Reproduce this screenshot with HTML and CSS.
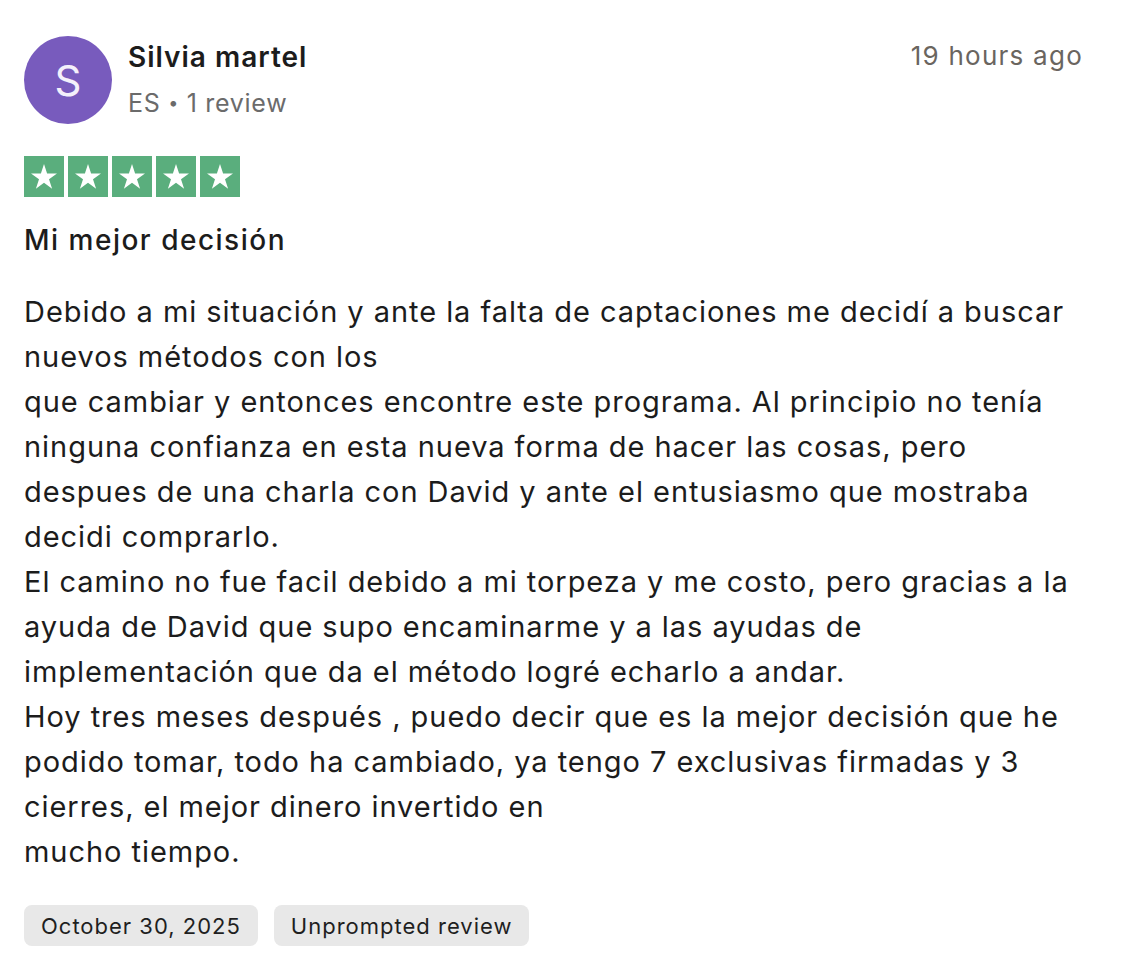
FILE: index.html
```html
<!DOCTYPE html>
<html lang="es">
<head>
<meta charset="utf-8">
<title>Review</title>
<link rel="stylesheet" href="styles.css">
</head>
<body>
<article class="review">
  <header class="review-head">
    <div class="avatar">S</div>
    <div class="who">
      <div class="name">Silvia martel</div>
      <div class="meta">ES <span class="dot">•</span> 1 review</div>
    </div>
    <time class="ago">19 hours ago</time>
  </header>
  <div class="stars">
    <span class="star"><svg viewBox="0 0 40 40"><path d="M20 7.5l3.1 9.4h9.9l-8 5.8 3.1 9.5-8.1-5.9-8.1 5.9 3.1-9.5-8-5.8h9.9z" fill="#fff"/></svg></span>
    <span class="star"><svg viewBox="0 0 40 40"><path d="M20 7.5l3.1 9.4h9.9l-8 5.8 3.1 9.5-8.1-5.9-8.1 5.9 3.1-9.5-8-5.8h9.9z" fill="#fff"/></svg></span>
    <span class="star"><svg viewBox="0 0 40 40"><path d="M20 7.5l3.1 9.4h9.9l-8 5.8 3.1 9.5-8.1-5.9-8.1 5.9 3.1-9.5-8-5.8h9.9z" fill="#fff"/></svg></span>
    <span class="star"><svg viewBox="0 0 40 40"><path d="M20 7.5l3.1 9.4h9.9l-8 5.8 3.1 9.5-8.1-5.9-8.1 5.9 3.1-9.5-8-5.8h9.9z" fill="#fff"/></svg></span>
    <span class="star"><svg viewBox="0 0 40 40"><path d="M20 7.5l3.1 9.4h9.9l-8 5.8 3.1 9.5-8.1-5.9-8.1 5.9 3.1-9.5-8-5.8h9.9z" fill="#fff"/></svg></span>
  </div>
  <h2 class="title">Mi mejor decisión</h2>
  <p class="body">Debido a mi situación y ante la falta de captaciones me decidí a buscar<br>nuevos métodos con los<br>que cambiar y entonces encontre este programa. Al principio no tenía<br>ninguna confianza en esta nueva forma de hacer las cosas, pero<br>despues de una charla con David y ante el entusiasmo que mostraba<br>decidi comprarlo.<br>El camino no fue facil debido a mi torpeza y me costo, pero gracias a la<br>ayuda de David que supo encaminarme y a las ayudas de<br>implementación que da el método logré echarlo a andar.<br>Hoy tres meses después , puedo decir que es la mejor decisión que he<br>podido tomar, todo ha cambiado, ya tengo 7 exclusivas firmadas y 3<br>cierres, el mejor dinero invertido en<br>mucho tiempo.</p>
  <div class="tags">
    <span class="tag">October 30, 2025</span>
    <span class="tag">Unprompted review</span>
  </div>
</article>
</body>
</html>
```
FILE: styles.css
```css
* { box-sizing: border-box; }
html, body { margin: 0; background: #fff; }
body { font-family: Inter, "Noto Sans", sans-serif; color: #1c1c1c; }
.review { padding: 36px 47px 0 24px; }
.review-head { display: flex; align-items: flex-start; }
.avatar {
  width: 88px; height: 88px; border-radius: 50%;
  background: #785bbd; color: #f4f0fb;
  display: flex; align-items: center; justify-content: center;
  font-size: 42px; font-weight: 400; flex: none;
}
.who { margin-left: 16px; flex: 1; }
.name { font-size: 28px; font-weight: 600; line-height: 36px; margin-top: 3px; color: #1c1c1c; letter-spacing: 1px; }
.meta { font-size: 25px; line-height: 34px; color: #6b6b6b; margin-top: 11px; letter-spacing: 0.7px; }
.dot { font-size: 18px; vertical-align: 3px; }
.ago { font-size: 26px; line-height: 36px; color: #6a655f; margin-top: 2px; letter-spacing: 1.25px; }
.stars { display: flex; gap: 4px; margin-top: 32px; }
.star { width: 40px; height: 41px; background: #5aae7d; display: block; }
.star svg { width: 40px; height: 41px; display: block; }
.title { font-size: 28px; font-weight: 500; line-height: 36px; margin: 25px 0 0; color: #1c1c1c; letter-spacing: 1.5px; }
.body { font-size: 29px; line-height: 45px; margin: 31px 0 0; color: #1c1c1c; letter-spacing: 0.95px; white-space: nowrap; }
.tags { display: flex; gap: 16px; margin-top: 31px; }
.tag { background: #e8e8e8; border-radius: 8px; height: 41px; padding: 0 17px; display: flex; align-items: center; font-size: 22px; color: #1f1f1f; letter-spacing: 1px; }
```
